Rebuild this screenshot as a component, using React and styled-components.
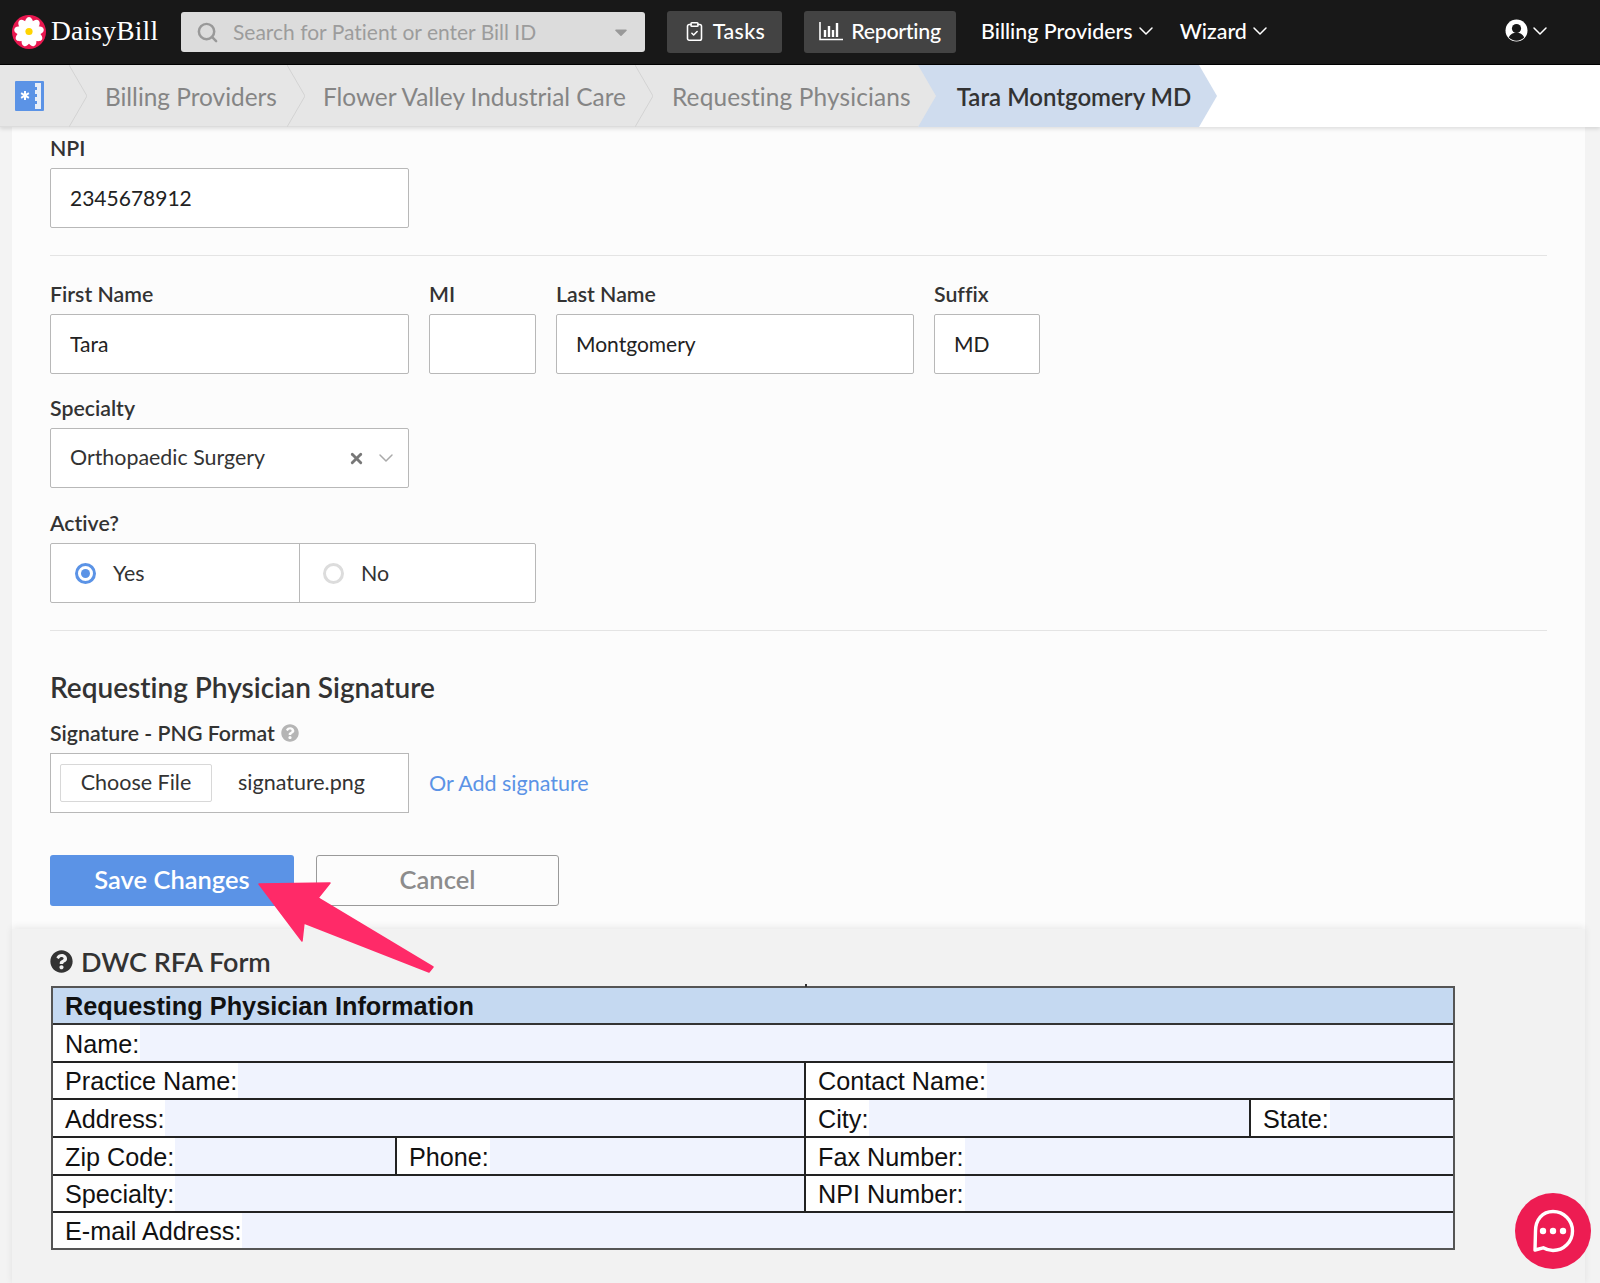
import React from 'react';
import styled, { createGlobalStyle } from 'styled-components';
import { ChevronDown, ClipboardCheck, Search, X } from 'lucide-react';
import { FaQuestionCircle, FaCaretDown } from 'react-icons/fa';

const Global = createGlobalStyle`
  html, body { margin: 0; padding: 0; height: 1283px; overflow: hidden; background: #f3f3f3; }
  body { font-family: Lato, "Open Sans", sans-serif; color: #333; -webkit-font-smoothing: antialiased; font-variant-ligatures: none; font-variant-numeric: proportional-nums; }
  input, button { font-variant-ligatures: none; font-variant-numeric: proportional-nums; }
  * { box-sizing: border-box; }
`;

const Nav = styled.header`
  height: 65px; background: #181818; border-bottom: 1px solid #000;
  display: flex; align-items: center; padding-left: 12px; color: #fff;
`;
const Logo = styled.div`display: flex; align-items: center; gap: 5px; width: 169px; flex: none;`;
const LogoText = styled.span`font-family: "Liberation Serif", serif; font-size: 27.5px; color: #fff; letter-spacing: 0.2px; padding-bottom: 2px;`;
const SearchBox = styled.div`
  width: 464px; height: 40px; background: #dcdcdc; border-radius: 3px; display: flex; align-items: center;
  padding: 0 14px 0 15px; color: #9a9a9a; font-size: 21px; flex: none;
`;
const SearchText = styled.span`flex: 1; margin-left: 14px; color: #9c9c9c; padding-bottom: 2px;`;
const NavButton = styled.div`
  height: 42px; background: #434343; border-radius: 3px; display: flex; align-items: center; justify-content: center;
  gap: 8px; font-size: 21.4px; font-weight: 500; width: ${p => p.$w}px; margin-left: ${p => p.$ml}px; flex: none; padding-bottom: 2px;
  letter-spacing: ${p => p.$ls || 0}px;
`;
const NavLink = styled.div`display: flex; align-items: center; gap: 1px; font-size: 21.4px; font-weight: 500; margin-left: ${p => p.$ml}px; flex: none; padding-bottom: 3px;`;
const UserMenu = styled.div`display: flex; align-items: center; margin-left: auto; margin-right: 48px; padding-bottom: 3px;`;

const Crumbs = styled.nav`
  height: 62px; background: #fff; display: flex; align-items: stretch; box-shadow: 0 2px 4px rgba(0,0,0,.12); position: relative; z-index: 2;
`;
const GrayPart = styled.div`display: flex; align-items: center; background: #e6e6e6; height: 62px; border-bottom: 1px solid #dcdcdc;`;
const Home = styled.div`width: 69px; padding-left: 15px; display: flex; align-items: center; flex: none;`;
const Crumb = styled.span`
  font-size: 24.4px; color: #858585; padding: 1px ${p => p.$pr}px 0 ${p => p.$pl}px; white-space: nowrap; letter-spacing: ${p => p.$ls || 0}px;
`;
const Current = styled.span`
  font-size: 24px; font-weight: 600; color: #333; background: #cfdcee; height: 62px; display: flex; align-items: center;
  padding: 0 8px 0 21px; white-space: nowrap;
`;
const Sep = styled.svg`display: block; flex: none;`;

const Main = styled.main`margin: 0 15px 0 12px; background: #fcfcfc;`;
const Form = styled.section`padding: 9px 38px 23px 38px;`;
const Row = styled.div`display: flex; gap: 20px; margin-top: ${p => p.$mt || 0}px;`;
const Field = styled.div`width: ${p => p.$w}px; flex: none;`;
const LinkField = styled(Field)`display: flex; align-items: center; padding-top: 32px;`;
const Label = styled.label`display: flex; align-items: center; gap: 6px; height: 24px; margin-bottom: 8px; font-size: 21.3px; font-weight: 600; color: #333;`;
const TextInput = styled.input`
  display: block; width: 100%; height: 60px; border: 1px solid #b8b8b8; border-radius: 2px; background: #fff;
  padding: 0 19px 2px; font: 400 21px Lato, sans-serif; color: #222; outline: none;
`;
const Select = styled.div`
  height: 60px; border: 1px solid #b8b8b8; border-radius: 2px; background: #fff; display: flex; align-items: center;
  padding: 0 10px 0 19px; font-size: 21.4px; color: #333;
`;
const SelectValue = styled.span`flex: 1; padding-bottom: 3px;`;
const SelectClear = styled.span`display: flex; color: #777; margin-right: 9px;`;
const Hr = styled.hr`border: 0; height: 1px; background: #e4e4e4; margin: ${p => p.$mt}px 0 ${p => p.$mb}px;`;
const RadioGroup = styled.div`
  width: 486px; height: 60px; border: 1px solid #b8b8b8; border-radius: 2px; background: #fff; display: flex;
`;
const RadioCell = styled.div`
  width: ${p => p.$w}px; display: flex; align-items: center; gap: 17px; padding-left: ${p => (p.$sep ? 24 : 23)}px; font-size: 21.4px; color: #333;
  border-right: ${p => (p.$sep ? '1px solid #b8b8b8' : '0')};
`;
const Radio = styled.span`
  width: 21px; height: 21px; border-radius: 50%; background: #fff; flex: none; display: flex; align-items: center; justify-content: center;
  border: 3px solid ${p => (p.$on ? '#5b93e6' : '#dcdcdc')};
  &::after { content: ''; width: 9px; height: 9px; border-radius: 50%; background: ${p => (p.$on ? '#5b93e6' : 'transparent')}; }
`;
const Heading = styled.h2`margin: 41px 0 0; height: 30px; line-height: 30px; font-size: 28px; font-weight: 600; color: #333;`;
const FileBox = styled.div`
  width: 359px; height: 60px; border: 1px solid #b8b8b8; background: #fff; display: flex; align-items: center; padding: 0 0 3px 9px; font-size: 21.5px; color: #333;
`;
const FileButton = styled.button`
  width: 152px; height: 38px; background: #fff; border: 1px solid #d8d8d8; border-radius: 2px; font: 400 21.5px Lato, sans-serif; color: #333; padding: 0 0 3px; margin: 3px 26px 0 0;
`;
const AddLink = styled.a`font-size: 21.5px; color: #5b93e6;`;
const Actions = styled.div`display: flex; gap: 22px; margin-top: 42px; align-items: stretch;`;
const Btn = styled.button`
  width: ${p => (p.$primary ? 244 : 243)}px; height: 51px; border-radius: 3px; font: 600 25.5px Lato, sans-serif; padding: 0 0 3px;
  background: ${p => (p.$primary ? '#5b93e6' : 'transparent')}; color: ${p => (p.$primary ? '#fff' : '#8c8c8c')};
  border: ${p => (p.$primary ? '0' : '1px solid #9a9a9a')};
`;
const Lower = styled.section`
  background: #f2f2f2; padding: 17px 38px 0; height: 356px; box-shadow: 0 -2px 7px rgba(0,0,0,.08);
`;
const LowerTitle = styled.h2`display: flex; align-items: center; gap: 8px; margin: 0 0 10px; height: 30px; font-size: 27px; font-weight: 600; color: #333;`;

const Table = styled.div`
  width: 1404px; margin-left: 1px; border: 2px solid #555; font-family: "Liberation Sans", Arial, sans-serif; background: #f0f3fe; position: relative;
  &::before { content: ''; position: absolute; left: 752px; top: -4px; width: 2px; height: 3px; background: #333; }
`;
const HeadRow = styled.div`
  background: #c5d9f1; display: flex; align-items: center; padding: 2px 0 0 12px; border-bottom: 2px solid #333;
  font-size: 25.3px; font-weight: 700; color: #111; height: 37px;
`;
const TRow = styled.div`display: flex; height: ${p => p.$h || 37}px; border-bottom: ${p => (p.$last ? '0' : '2px solid #222')};`;
const Cell = styled.div`display: flex; align-items: stretch; width: ${p => (p.$w ? p.$w + 'px' : 'auto')}; flex: ${p => (p.$w ? 'none' : 1)}; border-right: ${p => (p.$sep ? '2px solid #222' : '0')};`;
const CellLabel = styled.div`
  background: #fff; padding: 2px 1px 0 12px; display: flex; align-items: center; font-size: 25.2px; color: #111; white-space: nowrap;
`;

const Chat = styled.div`
  position: fixed; left: 1515px; top: 1193px; width: 76px; height: 76px; border-radius: 50%; background: #ed1c52;
  display: flex; align-items: center; justify-content: center;
`;
const ArrowOverlay = styled.svg`position: absolute; left: 0; top: 0; pointer-events: none; z-index: 5;`;

const Daisy = () => (
  <svg width="34" height="34" viewBox="0 0 34 34">
    <circle cx="17" cy="17" r="17" fill="#e8174f" />
    {[0, 40, 80, 120, 160, 200, 240, 280, 320].map(a => (
      <ellipse key={a} cx="17" cy="8.5" rx="4.2" ry="6.5" fill="#fff" transform={`rotate(${a} 17 17)`} />
    ))}
    <circle cx="17" cy="16.5" r="3.6" fill="#ffd400" />
  </svg>
);

const HomeIcon = () => (
  <svg width="29" height="30" viewBox="0 0 29 30">
    <rect x="0" y="0" width="29" height="30" rx="1" fill="#5b93e6" />
    <path d="M20 2h6v26h-6v-5h2v-3h-2v-4h2v-3h-2v-4h2V6h-2z" fill="#e8eef8" />
    <path d="M10 10v9M6.100 12.200l7.800 4.600M13.900 12.200l-7.800 4.600" stroke="#fff" strokeWidth="2" />
  </svg>
);

const ChartIcon = () => (
  <svg width="24" height="20" viewBox="0 0 24 20" fill="none" stroke="#fff">
    <path d="M1 1v17.500h23" strokeWidth="1.600" />
    <path d="M6 16V9M10 16V5M14 16V9M18 16V2" strokeWidth="2.400" />
  </svg>
);

const UserIcon = () => (
  <svg width="23" height="23" viewBox="0 0 23 23">
    <circle cx="11.500" cy="11.500" r="11" fill="#fff" />
    <circle cx="11.500" cy="9.500" r="4.600" fill="#181818" />
    <path d="M3.800 18.500c1.600-3.600 4.400-4.800 7.700-4.800s6.100 1.200 7.700 4.800c-2 2-4.700 3.200-7.700 3.200s-5.700-1.200-7.700-3.200z" fill="#181818" />
  </svg>
);

const ChatIcon = () => (
  <svg width="46" height="46" viewBox="0 0 46 46" fill="none">
    <path d="M23 3.500c10.800 0 19.500 8.700 19.500 19.500S33.800 42.500 23 42.500c-4 0-7-1-9.800-2.700L5 42l.5-19C5.500 12.200 12.200 3.500 23 3.500z" stroke="#fff" strokeWidth="3.400" strokeLinejoin="round" />
    <circle cx="13" cy="23" r="3.200" fill="#fff" />
    <circle cx="23" cy="23" r="3.200" fill="#fff" />
    <circle cx="33" cy="23" r="3.200" fill="#fff" />
  </svg>
);

const Chev = () => (
  <Sep width="18" height="62" viewBox="0 0 18 62">
    <path d="M0 0L18 31L0 62" fill="none" stroke="#d3d3d3" strokeWidth="1" />
  </Sep>
);

const BlueSep = styled(Sep)`background: #cfdcee;`;

export default function App() {
  return (
    <>
      <Global />
      <Nav>
        <Logo><Daisy /><LogoText>DaisyBill</LogoText></Logo>
        <SearchBox>
          <Search size={23} color="#999" strokeWidth={2.6} />
          <SearchText>Search for Patient or enter Bill ID</SearchText>
          <FaCaretDown size={20} color="#999" />
        </SearchBox>
        <NavButton $w={115} $ml={22} $ls={0.4}><ClipboardCheck size={21} strokeWidth={1.8} />Tasks</NavButton>
        <NavButton $w={152} $ml={22} $ls={-0.3}><ChartIcon />Reporting</NavButton>
        <NavLink $ml={25}>Billing Providers<ChevronDown size={24} strokeWidth={1.5} /></NavLink>
        <NavLink $ml={22}>Wizard<ChevronDown size={24} strokeWidth={1.5} /></NavLink>
        <UserMenu><UserIcon /><ChevronDown size={24} strokeWidth={1.5} /></UserMenu>
      </Nav>
      <Crumbs>
        <GrayPart>
          <Home><HomeIcon /></Home>
          <Chev />
          <Crumb $pl={18} $pr={10}>Billing Providers</Crumb>
          <Chev />
          <Crumb $pl={18} $pr={9}>Flower Valley Industrial Care</Crumb>
          <Chev />
          <Crumb $pl={19} $pr={7} $ls={0.15}>Requesting Physicians</Crumb>
        </GrayPart>
        <BlueSep width="18" height="62" viewBox="0 0 18 62">
          <path d="M0 0L18 31L0 62Z" fill="#e6e6e6" />
        </BlueSep>
        <Current>Tara Montgomery MD</Current>
        <Sep width="18" height="62" viewBox="0 0 18 62">
          <path d="M0 0L18 31L0 62Z" fill="#cfdcee" />
        </Sep>
      </Crumbs>
      <Main>
        <Form>
          <Field $w={359}>
            <Label>NPI</Label>
            <TextInput readOnly value="2345678912" />
          </Field>
          <Hr $mt={27} $mb={26} />
          <Row>
            <Field $w={359}><Label>First Name</Label><TextInput readOnly value="Tara" /></Field>
            <Field $w={107}><Label>MI</Label><TextInput readOnly value="" /></Field>
            <Field $w={358}><Label>Last Name</Label><TextInput readOnly value="Montgomery" /></Field>
            <Field $w={106}><Label>Suffix</Label><TextInput readOnly value="MD" /></Field>
          </Row>
          <Row $mt={22}>
            <Field $w={359}>
              <Label>Specialty</Label>
              <Select>
                <SelectValue>Orthopaedic Surgery</SelectValue>
                <SelectClear><X size={17} strokeWidth={4} /></SelectClear>
                <ChevronDown size={24} color="#aaa" strokeWidth={1.5} />
              </Select>
            </Field>
          </Row>
          <Row $mt={23}>
            <Field $w={486}>
              <Label>Active?</Label>
              <RadioGroup>
                <RadioCell $w={249} $sep><Radio $on />Yes</RadioCell>
                <RadioCell $w={235}><Radio />No</RadioCell>
              </RadioGroup>
            </Field>
          </Row>
          <Hr $mt={27} $mb={0} />
          <Heading>Requesting Physician Signature</Heading>
          <Row $mt={19}>
            <Field $w={359}>
              <Label>Signature - PNG Format <FaQuestionCircle size={18} color="#b5b5b5" /></Label>
              <FileBox><FileButton>Choose File</FileButton>signature.png</FileBox>
            </Field>
            <LinkField $w={200}>
              <AddLink>Or Add signature</AddLink>
            </LinkField>
          </Row>
          <Actions>
            <Btn $primary>Save Changes</Btn>
            <Btn>Cancel</Btn>
          </Actions>
        </Form>
        <Lower>
          <LowerTitle><FaQuestionCircle size={23} color="#333" />DWC RFA Form</LowerTitle>
          <Table>
            <HeadRow>Requesting Physician Information</HeadRow>
            <TRow $h={38}><Cell><CellLabel>Name:</CellLabel></Cell></TRow>
            <TRow>
              <Cell $w={753} $sep><CellLabel>Practice Name:</CellLabel></Cell>
              <Cell><CellLabel>Contact Name:</CellLabel></Cell>
            </TRow>
            <TRow $h={38}>
              <Cell $w={753} $sep><CellLabel>Address:</CellLabel></Cell>
              <Cell $w={445} $sep><CellLabel>City:</CellLabel></Cell>
              <Cell><CellLabel>State:</CellLabel></Cell>
            </TRow>
            <TRow $h={38}>
              <Cell $w={344} $sep><CellLabel>Zip Code:</CellLabel></Cell>
              <Cell $w={409} $sep><CellLabel>Phone:</CellLabel></Cell>
              <Cell><CellLabel>Fax Number:</CellLabel></Cell>
            </TRow>
            <TRow $h={37}>
              <Cell $w={753} $sep><CellLabel>Specialty:</CellLabel></Cell>
              <Cell><CellLabel>NPI Number:</CellLabel></Cell>
            </TRow>
            <TRow $h={35} $last><Cell><CellLabel>E-mail Address:</CellLabel></Cell></TRow>
          </Table>
        </Lower>
      </Main>
      <ArrowOverlay width="1600" height="1283" viewBox="0 0 1600 1283">
        <path d="M259 884L330 883L318 898L433 967L429 972L304 923L302 941Z" fill="#ff2a68" stroke="#ff2a68" strokeWidth="1.500" strokeLinejoin="round" />
      </ArrowOverlay>
      <Chat><ChatIcon /></Chat>
    </>
  );
}
